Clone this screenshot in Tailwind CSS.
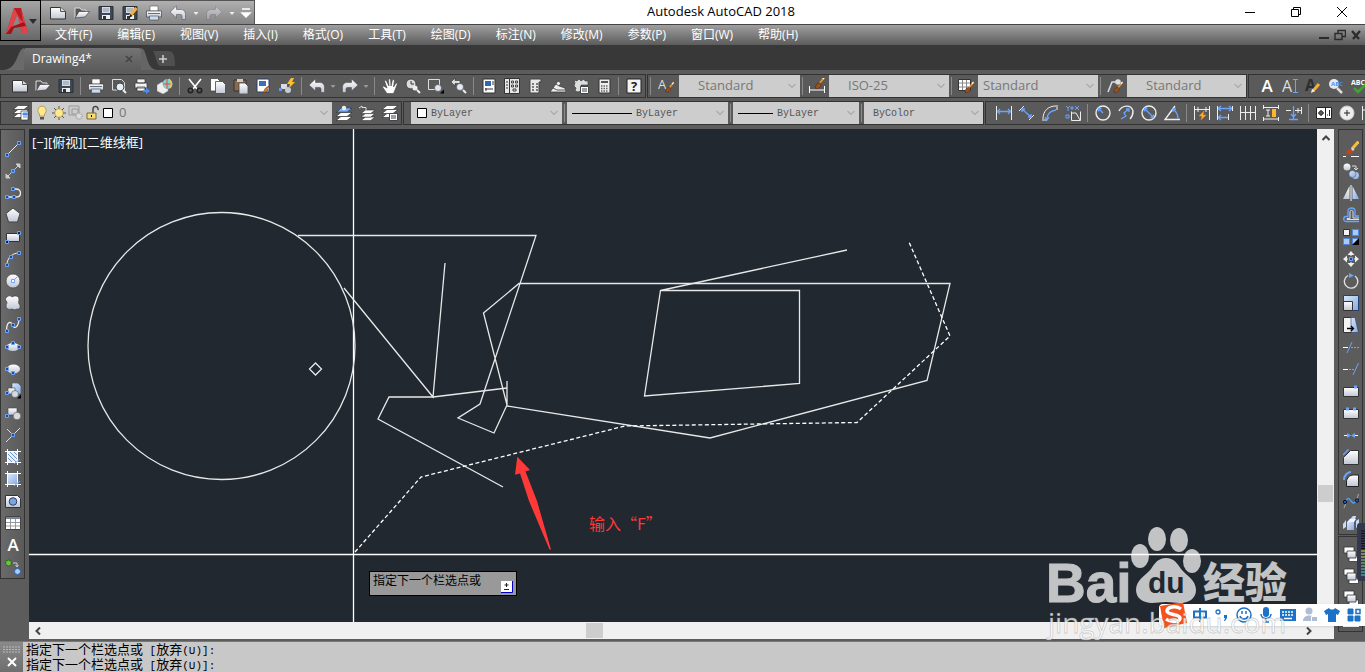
<!DOCTYPE html>
<html lang="zh-CN">
<head>
  <meta charset="UTF-8">
  <meta name="viewport" content="width=device-width, initial-scale=1">
  <title>Autodesk AutoCAD 2018</title>
  <script src="https://cdn.jsdelivr.net/npm/@tailwindcss/browser@4"></script>
</head>
<body class="relative flex h-screen flex-col overflow-hidden bg-[#5c5c5c] font-['Open_Sans','Noto_Sans_CJK_SC',sans-serif]">

  <!-- Shared icons -->
  <svg class="absolute size-0" aria-hidden="true">
    <defs>
      <linearGradient id="silver" x2="0" y2="1"><stop stop-color="#fff"/><stop offset="1" stop-color="#c0c6d4"/></linearGradient>
      <linearGradient id="sky" x2="1" y2="1"><stop stop-color="#d9e8ff"/><stop offset="1" stop-color="#86a9de"/></linearGradient>
    </defs>
    <symbol id="new" viewBox="0 0 16 16"><path d="M.5 2.500h10l5 4v7.500H.5z" fill="url(#silver)" stroke="#333"/><path d="M10.500 2.500v4h5" fill="#ddd" stroke="#555"/></symbol>
    <symbol id="open" viewBox="0 0 16 16"><path d="M1 13V3h5l1.500 2H12v2" fill="#555" stroke="#ddd"/><path d="M1 13l4-6.500h10.500L11 12z" fill="url(#silver)" stroke="#333" stroke-width=".6"/></symbol>
    <symbol id="save" viewBox="0 0 16 16"><path d="M1 1.500h14v13H1z" fill="#3d4756" stroke="#2b3038"/><path d="M4 2h8v6H4z" fill="#d5dbe3"/><path d="M5 4h6M5 6h6" stroke="#8b95a3"/><path d="M4 10h8v4H4z" fill="#eee"/><path d="M5 11h3v3H5z" fill="#333"/></symbol>
    <symbol id="print" viewBox="0 0 16 16"><path d="M4 1h8v5H4z" fill="#fff" stroke="#555" stroke-width=".6"/><path d="M.5 6h15v6H.5z" fill="url(#silver)" stroke="#333" stroke-width=".6"/><path d="M2 8.500h12" stroke="#69707a"/><path d="M3.500 11h9v4h-9z" fill="#c9dcf0" stroke="#444" stroke-width=".6"/></symbol>
    <symbol id="undo" viewBox="0 0 16 16"><path d="M0 7L6.500 1v3.500h4c3.500 0 5 2 5 5v5H12V11c0-1.500-1-1.500-2-1.500H6.500V13z" fill="url(#silver)" stroke="#444" stroke-width=".5"/></symbol>
    <symbol id="redo" viewBox="0 0 16 16"><path d="M16 7L9.500 1v3.500h-4C2 4.500.5 6.500.5 9.500v5H4V11c0-1.500 1-1.500 2-1.500h3.500V13z" fill="url(#silver)" stroke="#444" stroke-width=".5"/></symbol>
    <symbol id="drop" viewBox="0 0 8 8"><path d="M1.500 3h5L4 6z" fill="currentColor"/></symbol>
    <symbol id="chev" viewBox="0 0 8 8"><path d="M.5 2L4 5.500 7.500 2" fill="none" stroke="#aaa" stroke-width="1.200"/></symbol>
    <symbol id="brush" viewBox="0 0 16 16"><path d="M15 2l-5 6" stroke="#e9972c" stroke-width="2"/><path d="M15.500 1l-2 2.500" stroke="#fff" stroke-width="1.500"/><path d="M5 14c0-4 2-6 5-6l1.500 2c0 3-3 5-6.500 4z" fill="#9c5022" stroke="#4b2509" stroke-width=".6"/></symbol>
    <symbol id="sheets" viewBox="0 0 16 16"><g fill="#fff" stroke="#222" stroke-width=".6"><path d="M0 15.500l5-4h11l-5 4z"/><path d="M0 11.500l5-4h11l-5 4z"/><path d="M0 7.500l5-4h11l-5 4z"/></g></symbol>
    <symbol id="stack" viewBox="0 0 16 16"><g stroke="#333" stroke-width=".8"><path d="M1 1h10v6H1z" fill="#fff"/><path d="M6 10h9.500v5.500H6z" fill="#fff"/><path d="M4 5h9v7H4z" fill="url(#silver)"/></g></symbol>
  </svg>

  <!-- Title bar and menus -->
  <header class="flex h-[45px] shrink-0 bg-[#606060]">
    <button aria-label="AutoCAD" class="flex h-[41px] w-[41px] items-center border border-black bg-linear-to-b from-[#a5a5a5] to-[#686868] pl-1">
      <svg class="h-7 w-6" viewBox="0 0 24 28"><path d="M1 27L9 1h7l7 25h-6l-2-6-8 1-1 6z" fill="#c8262c"/><path d="M9 1L1 27l5-2L12 8l3 12 2 6 6 0L16 1z" fill="#e0444a"/><path d="M12 8L8 19l7-1z" fill="#8a8a8a"/><path d="M1 27l5-7 13-5 2 4-12 2-3 6z" fill="#a5141b"/><path d="M9 1l6 11 3 3-2-14z" fill="#b71d23"/></svg>
      <svg class="size-2 text-[#252d38]" viewBox="0 0 8 8"><path d="M0 2h8L4 7z" fill="currentColor"/></svg>
    </button>
    <div class="flex min-w-0 flex-1 flex-col">
      <div class="flex h-6 items-center bg-white">
        <div class="flex h-6 w-[214px] items-center border-t border-r border-[#555] bg-linear-to-b from-[#b0b0b0] to-[#858585] pl-[5px] text-[#eee] [&_svg]:size-4 [&>button]:grid [&>button]:h-6 [&>button]:w-6 [&>button]:shrink-0 [&>button]:place-items-center">
          <button aria-label="新建"><svg><use href="#new"/></svg></button>
          <button aria-label="打开"><svg><use href="#open"/></svg></button>
          <button aria-label="保存"><svg><use href="#save"/></svg></button>
          <button aria-label="另存为"><svg viewBox="0 0 16 16"><use href="#save"/><path d="M14.500 3L8 11" stroke="#f2b13a" stroke-width="3"/><path d="M8.500 9L7 13l3.500-2z" fill="#222"/></svg></button>
          <button aria-label="打印"><svg><use href="#print"/></svg></button>
          <button aria-label="放弃"><svg><use href="#undo"/></svg></button>
          <svg class="h-2! w-3!"><use href="#drop"/></svg>
          <button aria-label="重做" class="opacity-40"><svg><use href="#redo"/></svg></button>
          <svg class="h-2! w-3!"><use href="#drop"/></svg>
          <button aria-label="自定义" class="w-4!"><svg class="size-3!" viewBox="0 0 12 12"><path d="M2 2h8M2 6h8l-4 4z" stroke="#fff" stroke-width="1.500" fill="#fff"/></svg></button>
        </div>
        <h1 class="flex-1 pr-10 text-center text-[13px] text-black">Autodesk AutoCAD 2018</h1>
        <div class="flex text-black [&_svg]:size-3 [&>button]:grid [&>button]:h-6 [&>button]:w-[46px] [&>button]:place-items-center">
          <button aria-label="最小化"><svg viewBox="0 0 12 12"><path d="M1 6.500h10" stroke="currentColor"/></svg></button>
          <button aria-label="还原"><svg viewBox="0 0 12 12"><path d="M1.500 3.500h7v7h-7zM3.500 3V1.500h7v7H9" fill="none" stroke="currentColor"/></svg></button>
          <button aria-label="关闭"><svg viewBox="0 0 12 12"><path d="M1 1l10 10M11 1L1 11" stroke="currentColor"/></svg></button>
        </div>
      </div>
      <nav class="flex h-[21px] items-center gap-[25px] border-t border-[#444] bg-linear-to-b from-[#a0a0a0] to-[#5c5c5c] pl-3.5 text-xs whitespace-nowrap text-white">
        <a href="#">文件(F)</a>
        <a href="#">编辑(E)</a>
        <a href="#">视图(V)</a>
        <a href="#">插入(I)</a>
        <a href="#">格式(O)</a>
        <a href="#">工具(T)</a>
        <a href="#">绘图(D)</a>
        <a href="#">标注(N)</a>
        <a href="#">修改(M)</a>
        <a href="#">参数(P)</a>
        <a href="#">窗口(W)</a>
        <a href="#">帮助(H)</a>
        <div class="ml-auto flex gap-1 pr-[3px] text-[#2b2b2b] [&_svg]:size-3">
          <button aria-label="最小化图形"><svg viewBox="0 0 12 12"><path d="M1 9h10" stroke="currentColor" stroke-width="2"/></svg></button>
          <button aria-label="还原图形"><svg viewBox="0 0 12 12"><path d="M1 4.500h7v6H1zM4 4V1.500h7.500v6H8" fill="none" stroke="currentColor" stroke-width="1.400"/></svg></button>
          <button aria-label="关闭图形"><svg viewBox="0 0 12 12"><path d="M2 2l7 8M10 2L3 10" stroke="currentColor" stroke-width="2.400"/></svg></button>
        </div>
      </nav>
    </div>
  </header>

  <!-- Drawing tabs -->
  <div class="flex h-[25px] shrink-0 items-end bg-[#383838] pl-1 text-xs text-white">
    <svg class="h-[22px] w-5" viewBox="0 0 20 22"><path d="M0 22C14 21 13 1 20 0v22z" fill="#6a6a6a"/></svg>
    <div class="flex h-[22px] w-[117px] items-center justify-between rounded-t-xs bg-linear-to-b from-[#747474] to-[#5c5c5c] pl-2">
      <a href="#">Drawing4*</a>
      <button aria-label="关闭选项卡" class="pr-2"><svg class="size-2" viewBox="0 0 8 8"><path d="M1 1l6 6M7 1L1 7" stroke="#444" stroke-width="1.600"/></svg></button>
    </div>
    <svg class="h-[22px] w-4" viewBox="0 0 16 22"><path d="M0 0c7 1 4 21 16 22H0z" fill="#656565"/></svg>
    <button aria-label="新图形" class="-ml-1 mb-[3px]"><svg class="h-4 w-[22px]" viewBox="0 0 22 16"><path d="M0 0h15c5 0 7 3 7 15H7C3 13 3 4 0 0z" fill="#505050"/><path d="M6 8h8M10 4v8" stroke="#ccc" stroke-width="1.600"/></svg></button>
  </div>

  <!-- Toolbars -->
  <div class="flex shrink-0 flex-col gap-[3px] overflow-hidden py-1 [&_button]:grid [&_button]:h-[22px] [&_button]:w-[23px] [&_button]:shrink-0 [&_button]:place-items-center [&_hr]:mx-[3px] [&_hr]:h-[18px] [&_hr]:w-px [&_hr]:shrink-0 [&_hr]:border-0 [&_hr]:bg-[#8a8a8a] [&_svg]:size-4 [&_svg]:shrink-0">
    <div class="flex gap-px text-[13px] text-[#777]">
      <div class="flex h-6 w-[646px] shrink-0 items-center border border-[#333] bg-[#5a5a5a] pl-[7px]">
        <button aria-label="新建"><svg><use href="#new"/></svg></button>
        <button aria-label="打开"><svg><use href="#open"/></svg></button>
        <button aria-label="保存"><svg><use href="#save"/></svg></button>
        <hr>
        <button aria-label="打印"><svg><use href="#print"/></svg></button>
        <button aria-label="打印预览"><svg viewBox="0 0 16 16"><path d="M1.500 1.500h9l3 3V12h-12z" fill="#5a5a5a" stroke="#ddd"/><circle cx="9" cy="9" r="4" fill="#e8eef6" stroke="#444"/><path d="M12 12l3 3" stroke="#eee" stroke-width="2"/></svg></button>
        <button aria-label="发布"><svg viewBox="0 0 16 16"><path d="M3 1h8v4H3zM1 5h12v5H1zM3 9h8v4H3z" fill="#f2f3f5" stroke="#333" stroke-width=".7"/><path d="M9 12h3v-2.500l4 3.500-4 3V14H9z" fill="#4a8df0"/></svg></button>
        <button aria-label="三维打印"><svg viewBox="0 0 16 16"><path d="M0 7l5-3 6 3v6l-5 3-6-3z" fill="#eee" stroke="#999" stroke-width=".5"/><circle cx="10.500" cy="6" r="5" fill="#7fd0d8"/><path d="M10 1v10M6 6h9" stroke="#e54b2c"/><path d="M12 1c3 3 3 6 1 9" fill="none" stroke="#f6c742" stroke-width="1.500"/></svg></button>
        <hr>
        <button aria-label="剪切"><svg viewBox="0 0 16 16"><path d="M2 1l8 10M14 1L6 11" stroke="#fff" stroke-width="1.600"/><circle cx="3.500" cy="12.500" r="2.200" fill="none" stroke="#222" stroke-width="1.600"/><circle cx="12.500" cy="12.500" r="2.200" fill="none" stroke="#222" stroke-width="1.600"/></svg></button>
        <button aria-label="复制"><svg viewBox="0 0 16 16"><path d="M.5.5h7l3 3V13H.5z" fill="#fff" stroke="#444" stroke-width=".8"/><path d="M5.500 3.500h7l3 3v9h-10z" fill="url(#silver)" stroke="#444" stroke-width=".8"/></svg></button>
        <button aria-label="粘贴"><svg viewBox="0 0 16 16"><path d="M1 2h12v11H1z" fill="#8b6a4b" stroke="#333"/><path d="M4 1h6v3H4z" fill="#ccc"/><path d="M6 5h6l3 3v8H6z" fill="url(#silver)" stroke="#444" stroke-width=".8"/></svg></button>
        <button aria-label="特性匹配"><svg viewBox="0 0 16 16"><path d="M1 1h12v13H1z" fill="#fff" stroke="#27406b"/><path d="M3 3h7v5H3z" fill="#3e6fb5"/><path d="M14 8l-3 2 1 3-5 2c2-4 2-5 4-6z" fill="#d47a26" stroke="#7a3c0c" stroke-width=".6"/></svg></button>
        <button aria-label="块编辑器"><svg viewBox="0 0 16 16"><path d="M2 6h6v5H2z" fill="#ddd"/><circle cx="9" cy="12" r="3" fill="#c6cbd4"/><path d="M12 0L8 6h3l-1 4 6-6h-3l2-4z" fill="#ffc02e"/><path d="M0 10h3v3H0z" fill="#5b9bff"/></svg></button>
        <hr>
        <button aria-label="放弃"><svg><use href="#undo"/></svg></button>
        <svg class="h-2! w-2.5! text-[#999]"><use href="#drop"/></svg>
        <button aria-label="重做"><svg><use href="#redo"/></svg></button>
        <svg class="h-2! w-2.5! text-[#999]"><use href="#drop"/></svg>
        <hr>
        <button aria-label="实时平移"><svg viewBox="0 0 16 16"><path d="M5 15.500L.5 9l1-1L5 10 2.500 3 4 2l3 6-.5-7H8.500L9 8l1.500-6.500L12.500 2l-1 7L14 5l1.500.5L13 12l-1.500 3.500z" fill="#fff" stroke="#444" stroke-width=".6"/></svg></button>
        <button aria-label="实时缩放"><svg viewBox="0 0 16 16"><circle cx="6" cy="6" r="5" fill="#ddd" stroke="#444"/><path d="M6 3v3h3" fill="none" stroke="#333"/><circle cx="10" cy="10" r="2.500" fill="#eee"/><path d="M12 12l3 3" stroke="#eee" stroke-width="2"/></svg></button>
        <button aria-label="窗口缩放"><svg viewBox="0 0 16 16"><path d="M.5 1.500h11v10H.5z" fill="none" stroke="#ddd"/><circle cx="10" cy="10" r="3.500" fill="#dfe5ee" stroke="#444" stroke-width=".6"/><path d="M12 15.500h4v-4z" fill="#000"/></svg></button>
        <button aria-label="缩放上一个"><svg viewBox="0 0 16 16"><path d="M0 4l4-4v2.500h5v3H4V8z" fill="#ddd" stroke="#333" stroke-width=".6"/><circle cx="9" cy="9" r="3.500" fill="#e6ebf3" stroke="#444" stroke-width=".6"/><path d="M12 12l3 3" stroke="#eee" stroke-width="2"/></svg></button>
        <hr>
        <button aria-label="特性"><svg viewBox="0 0 16 16"><path d="M2 1h12v14H2z" fill="#fff" stroke="#333"/><path d="M4 3h6v5H4z" fill="#3565ad"/><path d="M4 11h8M12 3v4M5 13v-3" stroke="#333"/></svg></button>
        <button aria-label="设计中心"><svg viewBox="0 0 16 16"><path d="M.5.5h15v15H.5z" fill="#e8e8e8" stroke="#333"/><path d="M5.500 1v14" stroke="#333"/><path d="M2 4h2M2 7h2M2 10h2" stroke="#333"/><path d="M7.500 3h2v2h-2zM11.500 3h2v2h-2zM7.500 7h2v2h-2zM11.500 7h2v2h-2zM9 11h3v2H9z" fill="none" stroke="#444"/></svg></button>
        <button aria-label="工具选项板"><svg viewBox="0 0 16 16"><path d="M3 1h11v3h-2v11H3z" fill="#e8e8e8" stroke="#444"/><path d="M5 6h2M9 6h2M5 9h2M9 9h2M5 12h2M9 12h2" stroke="#555" stroke-width="1.500"/></svg></button>
        <button aria-label="图纸集"><svg viewBox="0 0 16 16"><path d="M0 14l3-4 5-7 3 2-2 3 6 2 1 4z" fill="#eee" stroke="#333" stroke-width=".7"/><path d="M3 10l4 2h8M6 6l3 2" stroke="#555" fill="none"/></svg></button>
        <button aria-label="标记集"><svg viewBox="0 0 16 16"><path d="M1 2l3 1 2-2 2 2 3-2 1 2 3 0v4H8v6l-3 1-3-1 1-3-2-2 1-3z" fill="#ddd" stroke="#333" stroke-width=".6"/><path d="M7.500 8.500h8v7h-8z" fill="#fff" stroke="#444"/><path d="M9 11h5M9 13h5" stroke="#345"/></svg></button>
        <button aria-label="计算器"><svg viewBox="0 0 16 16"><path d="M3 1h11v14H3z" fill="#eee" stroke="#333"/><path d="M5 3h7v2H5z" fill="#555"/><path d="M5 8h7M5 10.500h7M5 13h7" stroke="#666" stroke-width="1.500" stroke-dasharray="1.500 1"/></svg></button>
        <hr>
        <button aria-label="帮助"><svg viewBox="0 0 16 16"><path d="M1 1h14v14H1z" fill="#f4f4f4" stroke="#222"/><text x="8" y="13" text-anchor="middle" font-size="13" font-weight="700" fill="#222">?</text></svg></button>
      </div>
      <div class="flex h-6 w-[600px] shrink-0 items-center border border-[#333] bg-[#5a5a5a] [&>button]:w-6! [&>hr]:mx-0.5!">
        <hr>
        <button aria-label="文字样式" class="flex-1"><svg viewBox="0 0 16 16"><text x="0" y="11" font-size="13" fill="#ddd">A</text><use href="#brush" x="4" y="3" width="12" height="13"/></svg></button>
        <label class="flex h-[22px] w-[121px] items-center bg-[#cdcdcd] pr-1"><select aria-label="文字样式名" class="min-w-0 flex-1 appearance-none pl-[19px]"><option>Standard</option></select><svg class="size-2!"><use href="#chev"/></svg></label>
        <hr>
        <button aria-label="标注样式"><svg viewBox="0 0 16 16"><path d="M.5 8v7M15.500 8v7M1 12h14" stroke="#fff"/><use href="#brush" x="2" y="-2" width="14" height="14"/></svg></button>
        <label class="flex h-[22px] w-[120px] items-center bg-[#cdcdcd] pr-1"><select aria-label="标注样式名" class="min-w-0 flex-1 appearance-none pl-[19px]"><option>ISO-25</option></select><svg class="size-2!"><use href="#chev"/></svg></label>
        <hr>
        <button aria-label="表格样式"><svg viewBox="0 0 16 16"><path d="M.5 1.500h12v11H.5z" fill="#fff" stroke="#333"/><path d="M1 5h11M1 9h11M4.500 2v10M8.500 2v10" stroke="#888"/><use href="#brush" x="3" y="3" width="13" height="13"/></svg></button>
        <label class="flex h-[22px] w-[120px] items-center bg-[#cdcdcd] pr-1"><select aria-label="表格样式名" class="min-w-0 flex-1 appearance-none pl-[5px]"><option>Standard</option></select><svg class="size-2!"><use href="#chev"/></svg></label>
        <hr>
        <button aria-label="多重引线样式"><svg viewBox="0 0 16 16"><path d="M1 14L5 4h5" fill="none" stroke="#ddd" stroke-width="1.500"/><circle cx="11" cy="4" r="2.800" fill="#ddd"/><use href="#brush" x="3" y="3" width="13" height="13"/></svg></button>
        <label class="flex h-[22px] w-[119px] items-center bg-[#cdcdcd] pr-1"><select aria-label="引线样式名" class="min-w-0 flex-1 appearance-none pl-[19px]"><option>Standard</option></select><svg class="size-2!"><use href="#chev"/></svg></label>
      </div>
      <div class="flex h-6 min-w-0 flex-1 items-center border border-r-0 border-[#333] bg-[#5a5a5a] pl-1.5">
        <button aria-label="多行文字"><svg viewBox="0 0 16 16"><text x="8" y="14" text-anchor="middle" font-size="17" font-weight="600" fill="#fff">A</text></svg></button>
        <button aria-label="单行文字"><svg viewBox="0 0 16 16"><text x="0" y="14" font-size="16" fill="#ddd">A</text><path d="M11 1.500h5M11 14.500h5M13.500 2v12" stroke="#6aa4ff"/></svg></button>
        <button aria-label="编辑文字"><svg viewBox="0 0 16 16"><text x="0" y="13" font-size="16" font-weight="700" fill="#2d2d2d">A</text><path d="M14 6l-6 7" stroke="#f2b13a" stroke-width="3"/><path d="M7 11l-1 4 4-2z" fill="#eee"/></svg></button>
        <button aria-label="查找"><svg viewBox="0 0 16 16"><circle cx="6" cy="6" r="5" fill="#e4e9f2"/><text x="3" y="8" font-size="6" font-weight="700" fill="#4a8df0">ABC</text><path d="M9 10l5 5" stroke="#ddd" stroke-width="2.500"/></svg></button>
        <button aria-label="拼写检查"><svg viewBox="0 0 16 16"><text x="0" y="7" font-size="7" font-weight="700" fill="#fff">ABC</text><path d="M3 10l4 4 7-7" fill="none" stroke="#3fa52c" stroke-width="2.500"/></svg></button>
      </div>
    </div>

    <div class="flex gap-px text-[13px] text-[#777]">
      <div class="flex h-6 w-[402px] shrink-0 items-center border border-[#333] bg-[#5a5a5a] pl-2">
        <button aria-label="图层特性"><svg viewBox="0 0 16 16"><use href="#sheets" x="0" y="-3" width="16" height="16"/><path d="M8 6h7v9H8z" fill="#fff" stroke="#333" stroke-width=".7"/><path d="M10 8h4v2h-4zM10 12h4" fill="#4a8df0" stroke="#4a8df0"/></svg></button>
        <label class="flex h-[22px] w-[300px] items-center gap-px bg-[#cdcdcd] pr-1 pl-0.5">
          <svg viewBox="0 0 16 16"><path d="M8 1a4.500 4.500 0 0 0-2.500 8v2h5V9A4.500 4.500 0 0 0 8 1z" fill="#ffe98c" stroke="#a08a3a" stroke-width=".7"/><path d="M6 12h4v2.500H6z" fill="#555"/></svg>
          <svg viewBox="0 0 16 16"><path d="M8 1v14M1 8h14M3 3l10 10M13 3L3 13" stroke="#555"/><circle cx="8" cy="8" r="4.200" fill="#ffe98c" stroke="#a08a3a" stroke-width=".7"/></svg>
          <svg viewBox="0 0 16 16"><path d="M1 1h10v9H1zM4 4h6v5H4z" fill="none" stroke="#999"/><circle cx="11" cy="11" r="3" fill="#ddd" stroke="#aaa" stroke-dasharray="1 1" stroke-width="2"/></svg>
          <svg viewBox="0 0 16 16"><path d="M8 8V4c0-4 6-3 5 1" fill="none" stroke="#444" stroke-width="1.500"/><path d="M2 8h9v6H2z" fill="#f3dc7a" stroke="#7b6a28"/><path d="M6 10h1v2H6z" fill="#000"/></svg>
          <svg class="size-3!" viewBox="0 0 12 12"><path d="M1.500 1.500h9v9h-9z" fill="#fff" stroke="#000"/></svg>
          <select aria-label="图层" class="min-w-0 flex-1 appearance-none pl-1"><option>0</option></select>
          <svg class="size-2!"><use href="#chev"/></svg>
        </label>
        <button aria-label="置为当前"><svg viewBox="0 0 16 16"><use href="#sheets" width="16" height="16"/><path d="M1 7l4-4h10l-4 4z" fill="#7fb0f5" stroke="#1f3f75" stroke-width=".6"/><circle cx="8" cy="3" r="2.200" fill="#eee"/></svg></button>
        <button aria-label="上一个图层"><svg viewBox="0 0 16 16"><use href="#sheets" x="2" y="2" width="14" height="14"/><path d="M0 3l3-2v1.500h4V5" fill="none" stroke="#ddd"/></svg></button>
        <button aria-label="图层状态"><svg viewBox="0 0 16 16"><use href="#sheets" y="-3" width="16" height="16"/><path d="M7.500 8.500h8v7h-8z" fill="#fff" stroke="#444"/><path d="M9 11h5M9 13h5" stroke="#345"/></svg></button>
      </div>
      <div class="flex h-6 w-[581px] shrink-0 items-center border border-[#333] bg-[#5a5a5a] pl-[7px] font-['Liberation_Mono',monospace] text-[10px] text-[#555] [&>hr]:mx-0.5!">
        <label class="flex h-[22px] w-[151px] items-center bg-[#cdcdcd] pr-1 pl-[5px]"><svg class="size-3!" viewBox="0 0 12 12"><path d="M1.500 1.500h9v9h-9z" fill="#fff" stroke="#000"/></svg><select aria-label="颜色" class="min-w-0 flex-1 appearance-none pl-[3px]"><option>ByLayer</option></select><svg class="size-2!"><use href="#chev"/></svg></label>
        <hr>
        <label class="flex h-[22px] w-[161px] items-center bg-[#cdcdcd] pr-1 pl-[5px]"><span class="h-px w-[60px] bg-black"></span><select aria-label="线型" class="min-w-0 flex-1 appearance-none pl-1"><option>ByLayer</option></select><svg class="size-2!"><use href="#chev"/></svg></label>
        <hr>
        <label class="flex h-[22px] w-[126px] items-center bg-[#cdcdcd] pr-1 pl-[5px]"><span class="h-px w-[35px] bg-black"></span><select aria-label="线宽" class="min-w-0 flex-1 appearance-none pl-1"><option>ByLayer</option></select><svg class="size-2!"><use href="#chev"/></svg></label>
        <hr>
        <label class="flex h-[22px] w-[119px] items-center bg-[#cdcdcd] pr-1"><select aria-label="打印样式" class="min-w-0 flex-1 appearance-none pl-[9px]"><option>ByColor</option></select><svg class="size-2!"><use href="#chev"/></svg></label>
      </div>
      <div class="flex h-6 min-w-0 flex-1 items-center border border-r-0 border-[#333] bg-[#5a5a5a] pl-1.5 [&_svg]:fill-none [&_svg]:stroke-[#eee]">
        <button aria-label="线性"><svg viewBox="0 0 16 16"><path d="M.5 1v14M15.500 1v14"/><path d="M1 6.500h14M4 4L1.500 6.500 4 9M12 4l2.500 2.500L12 9" stroke="#6aa4ff" stroke-width="1.300"/></svg></button>
        <button aria-label="对齐"><svg viewBox="0 0 16 16"><path d="M0 6l5-5M10 15l5-5"/><path d="M3 4l9 8M3 7V4h3M12 9v3H9" stroke="#6aa4ff" stroke-width="1.300"/></svg></button>
        <button aria-label="弧长"><svg viewBox="0 0 16 16"><path d="M1 14C1 6 6 1 14 1M0 15h5M15 0v5"/><path d="M5 14c0-5 3-8 9-9M3 12l2 3 2-3" stroke="#6aa4ff" stroke-width="1.300"/></svg></button>
        <button aria-label="坐标"><svg viewBox="0 0 16 16"><path d="M6.500 15.500h9v-9M6.500 15.500v-9M7 8h4l4 7"/><path d="M1 1l2 2 2-2M3 3v3M10 1l4 4M14 1l-4 4M1 10h3v3H1zM6 2h2v2H6z" stroke="#6aa4ff"/></svg></button>
        <hr>
        <button aria-label="半径"><svg viewBox="0 0 16 16"><circle cx="8" cy="8" r="7" stroke-width="1.400"/><path d="M8 8L3.500 3.500M3.500 6.500v-3h3" stroke="#6aa4ff" stroke-width="1.300"/></svg></button>
        <button aria-label="折弯"><svg viewBox="0 0 16 16"><path d="M1 6c3-6 12-7 14 0 0 3-1 6-3 8" stroke-width="1.400"/><path d="M3 14l5-3-2-3 5-4M8 4h3v3" stroke="#6aa4ff" stroke-width="1.300"/></svg></button>
        <button aria-label="直径"><svg viewBox="0 0 16 16"><circle cx="8" cy="8" r="7" stroke-width="1.400"/><path d="M3.500 3.500l9 9M3.500 6.500v-3h3M12.500 9.500v3h-3" stroke="#6aa4ff" stroke-width="1.300"/></svg></button>
        <button aria-label="角度"><svg viewBox="0 0 16 16"><path d="M11 1L1 14.500h15" stroke-width="1.400"/><path d="M9 4c4 3 5 6 5 10M9 7V4h3" stroke="#6aa4ff" stroke-width="1.300"/></svg></button>
        <hr>
        <button aria-label="快速标注"><svg viewBox="0 0 16 16"><path d="M.5 1v14M15.500 1v14M1 4.500h14M4 2v5M12 2v5"/><path d="M10 6l-5 5h3l-1 4 5-5H9z" fill="#ffb52e" stroke="#e8801a" stroke-width=".6"/></svg></button>
        <button aria-label="基线"><svg viewBox="0 0 16 16"><path d="M1 3.500h14M1 12.500h10M4 1L1 3.500 4 6M12 1l3 2.500L12 6M4 10l-3 2.500L4 15" stroke="#6aa4ff" stroke-width="1.300"/><path d="M.5 1v14M15.500 1v5M11.500 9v6"/></svg></button>
        <button aria-label="连续"><svg viewBox="0 0 16 16"><path d="M.5 1v14M5.500 1v14M10.500 1v14M15.500 1v14M1 7.500h14"/></svg></button>
        <button aria-label="等距标注"><svg viewBox="0 0 16 16"><path d="M.5 0v4M15.500 0v4M1 2.500h14M.5 12v4M15.500 12v4M1 14h14M3 5h4M5 5v6M3 11h4"/><path d="M9 4h4v8H9z" fill="#ffb52e" stroke="none"/></svg></button>
        <button aria-label="折断标注"><svg viewBox="0 0 16 16"><path d="M0 5.500h5M9 5.500h7M15.500 2v7M12 3v5"/><path d="M7.500 1v14M3 14.500h9M5 9l2.500 3L10 9" stroke="#6aa4ff" stroke-width="1.300"/></svg></button>
        <hr>
        <button aria-label="公差"><svg viewBox="0 0 16 16"><path d="M.5 2.500h15v11H.5z" fill="#fff" stroke="#222"/><path d="M9.500 3v10M2 8h6M5 5v6M13.500 5v6M11 10h1" stroke="#222"/><circle cx="5" cy="8" r="2" stroke="#222"/></svg></button>
        <button aria-label="圆心标记"><svg viewBox="0 0 16 16"><circle cx="8" cy="8" r="7" fill="#eee" stroke="#ccc"/><path d="M8 5v6M5 8h6" stroke="#222"/></svg></button>
        <button aria-label="检验"><svg viewBox="0 0 16 16"><path d="M.5 1v14M1 5h15"/><path d="M3 11l3 3 6-6" stroke="#3fa52c" stroke-width="2"/></svg></button>
      </div>
    </div>
  </div>

  <!-- Work area -->
  <main class="flex min-h-0 flex-1 gap-1 pr-0.5 pb-0.5 [&_aside_button]:grid [&_aside_button]:h-[22px] [&_aside_button]:w-[23px] [&_aside_button]:shrink-0 [&_aside_button]:place-items-center [&_aside_svg]:size-4">
    <aside class="flex w-[25px] shrink-0 flex-col self-start border border-[#333] bg-linear-to-r from-[#6a6a6a] to-[#5a5a5a] pt-2">
      <button aria-label="直线"><svg viewBox="0 0 16 16"><path d="M2 14L14 2" stroke="#eee"/><path d="M.5 12.500h3v3h-3zM12.500.5h3v3h-3z" fill="#2b4a80" stroke="#6aa4ff"/></svg></button>
      <button aria-label="构造线"><svg viewBox="0 0 16 16"><path d="M3 13L13 3" stroke="#ccc"/><path d="M1 15v-4l4 4zM15 1v4l-4-4z" fill="#ccc" stroke="#ccc"/><path d="M6.500 6.500h3v3h-3z" fill="#2b6adf" stroke="#6aa4ff"/></svg></button>
      <button aria-label="多段线"><svg viewBox="0 0 16 16"><path d="M2 12h9c6 0 6-8 0-8H8" fill="none" stroke="#eee" stroke-width="1.300"/><path d="M.5 10.500h3v3h-3zM7.500 10.500h3v3h-3zM6.500 2.500h3v3h-3z" fill="#2b4a80" stroke="#6aa4ff"/></svg></button>
      <button aria-label="多边形"><svg viewBox="0 0 16 16"><path d="M8 1l7 5.500L12.500 15h-9L1 6.500z" fill="url(#silver)" stroke="#444"/></svg></button>
      <button aria-label="矩形"><svg viewBox="0 0 16 16"><path d="M1.500 4.500h13v8h-13z" fill="url(#silver)" stroke="#333"/><path d="M.5 11.500h3v3h-3zM12.500 2.500h3v3h-3z" fill="#222" stroke="#6aa4ff"/></svg></button>
      <button aria-label="圆弧"><svg viewBox="0 0 16 16"><path d="M2 14C2 7 7 2 14 2" fill="none" stroke="#eee"/><path d="M.5 12.500h3v3h-3zM4.500 4.500h3v3h-3zM12.500.5h3v3h-3z" fill="#2b4a80" stroke="#6aa4ff"/></svg></button>
      <button aria-label="圆"><svg viewBox="0 0 16 16"><circle cx="8" cy="8" r="7" fill="url(#silver)" stroke="#444" stroke-width=".7"/><path d="M8 8l4-4" stroke="#6aa4ff"/><path d="M6.500 6.500h3v3h-3z" fill="#fff" stroke="#6aa4ff"/></svg></button>
      <button aria-label="修订云线"><svg viewBox="0 0 16 16"><path d="M2 2c2-2 4-1 5 0 3-2 7-1 7 2 0 2-1 3 0 5 2 2 1 6-2 5-2 1-3 1-5 0-3 1-6 0-6-3 0-2 1-2 1-4C0 5 0 3 2 2z" fill="url(#silver)" stroke="#444" stroke-width=".7"/></svg></button>
      <button aria-label="样条曲线"><svg viewBox="0 0 16 16"><path d="M1.500 14c0-9 4-11 6-6s6 2 6.500-6" fill="none" stroke="#eee" stroke-width="1.300"/><path d="M.5 12.500h3v3h-3zM6.500 6.500h3v3h-3zM12.500.5h3v3h-3z" fill="#2b4a80" stroke="#6aa4ff"/></svg></button>
      <button aria-label="椭圆"><svg viewBox="0 0 16 16"><ellipse cx="8" cy="8" rx="6.500" ry="4" fill="url(#silver)"/><path d="M.5 6.500h3v3h-3zM12.500 6.500h3v3h-3zM6.500 2.500h3v3h-3z" fill="#2b4a80" stroke="#6aa4ff"/></svg></button>
      <button aria-label="椭圆弧"><svg viewBox="0 0 16 16"><ellipse cx="8.500" cy="8" rx="6.500" ry="4.500" fill="url(#silver)"/><path d="M.5 6.500h3v3h-3zM6.500 10.500h3v3h-3z" fill="#2b4a80" stroke="#6aa4ff"/></svg></button>
      <button aria-label="插入块"><svg viewBox="0 0 16 16"><path d="M7 0h6l3 3v8H7z" fill="url(#sky)" stroke="#444" stroke-width=".6"/><path d="M3 5h7v6H3z" fill="url(#silver)" stroke="#444" stroke-width=".6"/><circle cx="10" cy="11" r="3.500" fill="#d5d9e0" stroke="#555" stroke-width=".6"/><path d="M12 15.500h4v-4z"/><path d="M.5 8.500h3v3h-3z" fill="#2b4a80" stroke="#6aa4ff"/></svg></button>
      <button aria-label="创建块"><svg viewBox="0 0 16 16"><path d="M3 3h9v7H3z" fill="url(#silver)" stroke="#444" stroke-width=".6"/><circle cx="12" cy="11" r="3.800" fill="#d5d9e0" stroke="#555" stroke-width=".6"/><path d="M.5 9.500h3v3h-3z" fill="#2b4a80" stroke="#6aa4ff"/></svg></button>
      <button aria-label="点"><svg viewBox="0 0 16 16"><path d="M2 2l7 7M15 1L1 15" stroke="#ddd"/><path d="M6.500 6.500h3v3h-3z" fill="#2b4a80" stroke="#6aa4ff"/></svg></button>
      <button aria-label="图案填充"><svg viewBox="0 0 16 16"><path d="M3 3h10v10H3z" fill="#e9f1ff"/><path d="M3 9l4 4M3 5l8 8M5 3l8 8M9 3l4 4" stroke="#6d94d0"/><path d="M2.500 0v16M12.500 0v16M0 2.500h16M0 13.500h16" stroke="#fff"/><path d="M9 15l6-5" stroke="#6aa4ff"/></svg></button>
      <button aria-label="渐变色"><svg viewBox="0 0 16 16"><path d="M3 3h10v10H3z" fill="url(#sky)"/><path d="M2.500 0v16M12.500 0v16M0 2.500h16M0 13.500h16" stroke="#fff"/><path d="M9 15l6-5" stroke="#6aa4ff"/></svg></button>
      <button aria-label="面域"><svg viewBox="0 0 16 16"><path d="M.5 2.500h12l3 3v9H.5z" fill="url(#silver)" stroke="#333"/><circle cx="8" cy="8.500" r="3.800" fill="#7fa4db" stroke="#27406b"/></svg></button>
      <button aria-label="表格"><svg viewBox="0 0 16 16"><path d="M.5 1.500h15v13H.5z" fill="#fff" stroke="#444"/><path d="M1 2h14v2H1z" fill="#76869c"/><path d="M1 7.500h14M1 11h14M5.500 4v10M10.500 4v10" stroke="#999"/></svg></button>
      <button aria-label="多行文字"><svg viewBox="0 0 16 16"><text x="8" y="14" text-anchor="middle" font-size="17" font-weight="600" fill="#fff">A</text></svg></button>
      <button aria-label="添加选定对象"><svg viewBox="0 0 16 16"><circle cx="3.500" cy="4" r="3" fill="#6cbf3f" stroke="#2d6a16"/><circle cx="12.500" cy="12.500" r="3" fill="#a9cdfb" stroke="#2d62b5"/><path d="M8 4h4v3M10.500 6l1.500 2 1.500-2" fill="none" stroke="#ccc"/></svg></button>
    </aside>

    <section class="flex min-w-0 flex-1 flex-col">
      <div class="flex min-h-0 flex-1">
        <div class="relative min-w-0 flex-1 overflow-hidden bg-[#212830]">
          <svg class="size-full" fill="none" stroke="#e8e8e8" stroke-width="1.300">
            <!-- crosshair -->
            <path d="M324.500 0V493M0 425.500H2000" stroke="#fff"/>
            <g transform="translate(-29 -129)">
              <circle cx="221.500" cy="346" r="133.500"/>
              <path d="M298 235.500h238L480 404l-22 14 36 15 13-28-23.500-92 35.500-29.500h431L927 380.500 710 438 507 406v-25"/>
              <path d="M344 288l89 109 12-134"/>
              <path d="M503 487l-125-68 11-22h44l74-9"/>
              <path d="M660.500 290.500h139v93L644.500 396zL847 250"/>
              <path d="M315.500 363l6 6-6 6-6-6z"/>
              <path d="M355 552l66-75 204-51 232-3.500L950 336l-41-94" stroke="#fff" stroke-dasharray="4 2.500"/>
              <path d="M517.300 456.700L530 470l-4.500 1.500L537 501l14 48.500h-1.500L529 501l-9-27.500-5 1.200z" fill="#ff3838" stroke="none"/>
            </g>
          </svg>
          <p class="absolute top-[5px] left-[3px] text-[13px] leading-4 text-white">[−][俯视][二维线框]</p>
          <p class="absolute top-[384px] left-[560px] font-['Noto_Sans_CJK_SC',sans-serif] text-base leading-5 text-[#ff3838]">输入“F”</p>
          <div class="absolute top-[442px] left-[340px] flex h-[25px] w-[148px] justify-between border border-black bg-[#999] px-[3px] pt-px text-xs text-black">
            <span>指定下一个栏选点或</span>
            <button aria-label="选项" class="self-end pb-0.5"><svg class="size-3" viewBox="0 0 12 12"><path d="M0 0h11v11H0z" fill="#fff"/><path d="M0 11.500h11.500V0" fill="none" stroke="#00c"/><path d="M3 8.500h5M5.500 2v4M3.500 4h4" stroke="#222"/></svg></button>
          </div>
        </div>
        <div class="flex w-[17px] shrink-0 flex-col items-center bg-[#f0f0f0]">
          <button aria-label="向上滚动" class="grid size-[17px] place-items-center"><svg class="size-2" viewBox="0 0 8 8"><path d="M.5 6L4 2.500 7.500 6" fill="none" stroke="#444" stroke-width="2"/></svg></button>
          <div class="flex-[339]"></div>
          <div class="h-[17px] w-[15px] bg-[#cdcdcd]"></div>
          <div class="flex-[120]"></div>
        </div>
      </div>
      <div class="flex h-[17px] shrink-0 items-center bg-[#f0f0f0] pr-[17px]">
        <button aria-label="向左滚动" class="grid size-[17px] place-items-center"><svg class="size-2" viewBox="0 0 8 8"><path d="M6 .5L2.500 4 6 7.500" fill="none" stroke="#444" stroke-width="2"/></svg></button>
        <div class="flex-[540]"></div>
        <div class="h-[15px] w-[17px] bg-[#cdcdcd]"></div>
        <div class="flex-[697]"></div>
        <button aria-label="向右滚动" class="grid size-[17px] place-items-center"><svg class="size-2" viewBox="0 0 8 8"><path d="M2 .5L5.500 4 2 7.500" fill="none" stroke="#444" stroke-width="2"/></svg></button>
      </div>
    </section>

    <div class="flex w-[25px] shrink-0 flex-col overflow-hidden">
      <aside class="flex shrink-0 flex-col border border-[#333] bg-[#5c5c5c] pt-2">
        <button aria-label="删除"><svg viewBox="0 0 16 16"><path d="M15.500.5L9 8" stroke="#f5bd3c" stroke-width="3"/><path d="M9.500 6.500l2 2-2 2-2-2z" fill="#cfd8e6"/><path d="M8 8l2 2c-1 4-4 4-7 3 1-4 3-5 5-5z" fill="#c3441a"/><path d="M0 15.500h3M8 15.500h8" stroke="#fff"/></svg></button>
        <button aria-label="复制"><svg viewBox="0 0 16 16"><circle cx="4" cy="4" r="3.500" fill="url(#silver)"/><circle cx="12.500" cy="12.500" r="3.500" fill="url(#sky)"/><circle cx="9.500" cy="11" r="3.500" fill="url(#sky)" stroke="#456" stroke-width=".5"/><path d="M9 3h4v4M11 5l2 2 2-2" fill="none" stroke="#ddd"/></svg></button>
        <button aria-label="镜像"><svg viewBox="0 0 16 16"><path d="M6.500 1v13H0z" fill="url(#silver)"/><path d="M9.500 1v13H16z" fill="url(#sky)"/><path d="M8 0v16" stroke="#fff"/></svg></button>
        <button aria-label="偏移"><svg viewBox="0 0 16 16"><path d="M16 14.500H3c-3 0-3-5 0-5h2V4c0-4 7-4 7 0v5h4" fill="none" stroke="#6aa4ff" stroke-width="1.300"/><path d="M16 12.500H4v-1h3V4.500c0-1.500 3-1.500 3 0V11h6" fill="none" stroke="#ddd"/></svg></button>
        <button aria-label="阵列"><svg viewBox="0 0 16 16"><path d="M.5.5h6v6h-6z" fill="#f4f4f4" stroke="#333"/><path d="M9.500.5h6v6h-6zM.5 9.500h6v6h-6zM9.500 9.500h6v6h-6z" fill="#a9c9fa" stroke="#4d86dd"/><path d="M9 16h7V9z"/></svg></button>
        <button aria-label="移动"><svg viewBox="0 0 16 16"><path d="M8 0l3.500 4h-7zM8 16l3.500-4h-7zM0 8l4-3.500v7zM16 8l-4-3.500v7z" fill="#eee"/><path d="M8 3v10M3 8h10" stroke="#eee" stroke-dasharray="2 6"/><path d="M6.500 6.500h3v3h-3z" fill="#2b4a80" stroke="#6aa4ff"/></svg></button>
        <button aria-label="旋转"><svg viewBox="0 0 16 16"><path d="M5 2.500a6.700 6.700 0 1 0 7 .5" fill="none" stroke="#ddd" stroke-width="1.400"/><path d="M6 0l5 2.500L6 5z" fill="#6aa4ff"/></svg></button>
        <button aria-label="缩放"><svg viewBox="0 0 16 16"><path d="M.5.500h15v15H.5z" fill="url(#sky)" stroke="#27406b"/><path d="M.5 6.500h9v9h-9z" fill="url(#silver)" stroke="#333"/></svg></button>
        <button aria-label="拉伸"><svg viewBox="0 0 16 16"><path d="M.5.500h8v15h-8z" fill="#f4f4f4" stroke="#333"/><path d="M8 .5h4l3.500 15H8z" fill="url(#sky)" stroke="#27406b" stroke-width=".6"/><path d="M4 11.500h6M8 9l2.500 2.500L8 14" fill="none" stroke="#000" stroke-width="1.300"/></svg></button>
        <button aria-label="修剪"><svg viewBox="0 0 16 16"><path d="M0 8.500h5" stroke="#fff"/><path d="M8 8.500h8" stroke="#6aa4ff" stroke-dasharray="2 1"/><path d="M9 3L4 14" stroke="#6aa4ff"/></svg></button>
        <button aria-label="延伸"><svg viewBox="0 0 16 16"><path d="M0 8.500h5" stroke="#fff"/><path d="M6 8.500h6" stroke="#6aa4ff" stroke-dasharray="2 1"/><path d="M15.500 2L10 14" stroke="#6aa4ff"/></svg></button>
        <button aria-label="打断于点"><svg viewBox="0 0 16 16"><path d="M.5 4.500h15v9H.5z" fill="url(#silver)" stroke="#333"/><path d="M11 2.500h3v3h-3z" fill="#6aa4ff"/></svg></button>
        <button aria-label="打断"><svg viewBox="0 0 16 16"><path d="M.5 4.500h15v9H.5z" fill="url(#silver)" stroke="#333"/><path d="M3 2.500h3v3H3zM10 2.500h3v3h-3z" fill="#6aa4ff"/></svg></button>
        <button aria-label="合并"><svg viewBox="0 0 16 16"><path d="M1 8.500h5M10 8.500h5" stroke="#fff"/><path d="M4 6l4 2.500L4 11zM12 6L8 8.500l4 2.500z" fill="#6aa4ff"/></svg></button>
        <button aria-label="倒角"><svg viewBox="0 0 16 16"><path d="M.5 15.500v-7l7-7h8v14z" fill="url(#silver)" stroke="#333"/><path d="M0 6l5.500-5.500" stroke="#6aa4ff" stroke-width="1.500"/></svg></button>
        <button aria-label="圆角"><svg viewBox="0 0 16 16"><path d="M3.500 15.500V11c0-4 3-7 7-7h5v11.500z" fill="url(#silver)" stroke="#222"/><path d="M1 9c0-4 3-8 7-8" fill="none" stroke="#6aa4ff" stroke-width="2"/></svg></button>
        <button aria-label="光顺曲线"><svg viewBox="0 0 16 16"><path d="M2 9c3-5 4-4 6-1s4 3 6-2" fill="none" stroke="#4fa0e8" stroke-width="1.400"/><path d="M1 15l2-5M14 6l1.500-5" stroke="#aaa"/><circle cx="2" cy="9" r="1.700" fill="#1f57b8" stroke="#112"/><circle cx="14" cy="7.500" r="1.700" fill="#1f57b8" stroke="#112"/></svg></button>
        <button aria-label="分解"><svg viewBox="0 0 16 16"><path d="M0 9l3-4v7l-3 2zM7 4l3-3h3l-1 4H6zM13 6l3-2v6l-3 3z" fill="#c6dcf8"/><path d="M4 7h7v8H4z" fill="url(#sky)"/><path d="M4 7l3-3h6l-2 3z" fill="#eef5ff"/></svg></button>
      </aside>
      <aside class="mt-px flex shrink-0 flex-col border border-[#333] bg-[#5c5c5c] pt-1.5">
        <button aria-label="前置"><svg><use href="#stack"/></svg></button>
        <button aria-label="后置"><svg><use href="#stack"/></svg></button>
        <button aria-label="置于对象之上"><svg><use href="#stack"/></svg></button>
        <button aria-label="置于对象之下"><svg viewBox="0 0 16 16"><path d="M0 14.500h16" stroke="#fff"/></svg></button>
      </aside>
    </div>
  </main>

  <!-- Command line -->
  <footer class="flex h-[31px] shrink-0 overflow-hidden border-t border-[#777] bg-[#c8c8c8] text-[13px] leading-[15px] text-black">
    <div class="flex w-[23px] shrink-0 flex-col items-center justify-between bg-linear-to-b from-[#8a8a8a] to-[#6e6e6e] pt-1 pb-1">
      <svg class="h-[7px] w-[18px]" viewBox="0 0 18 7"><path d="M0 1h18M0 3.500h18M0 6h18" stroke="#bbb" stroke-dasharray="2 1"/></svg>
      <button aria-label="关闭命令行"><svg class="size-3" viewBox="0 0 12 12"><path d="M2 2l8 8M10 2l-8 8" stroke="#fff" stroke-width="2"/></svg></button>
    </div>
    <div class="pl-[3px] whitespace-nowrap">
      <p class="h-[15px]">指定下一个栏选点或<span class="font-['Liberation_Mono',monospace] text-[11px]"> [</span>放弃<span class="font-['Liberation_Mono',monospace] text-[11px]">(U)]:</span></p>
      <p class="h-[15px]">指定下一个栏选点或<span class="font-['Liberation_Mono',monospace] text-[11px]"> [</span>放弃<span class="font-['Liberation_Mono',monospace] text-[11px]">(U)]:</span></p>
    </div>
  </footer>

  <!-- Input method bar -->
  <div class="absolute right-0 bottom-[46px] flex h-[22px] items-center rounded-l bg-white text-[#1b72c6] shadow-sm [&_svg]:size-4 [&>button]:grid [&>button]:w-[22px] [&>button]:place-items-center">
    <svg class="h-7! w-[30px]!" viewBox="0 0 30 28"><path d="M1 5l23-4 4 21-23 5z" fill="#f4511e"/><path d="M22 8C17 4 8 6 8 10s13 3 13 7-9 5-14 1" fill="none" stroke="#fff" stroke-width="3.500"/></svg>
    <button aria-label="中文"><svg viewBox="0 0 16 16"><path d="M2 4.500h12v6H2zM8 1v14" fill="none" stroke="currentColor" stroke-width="2"/></svg></button>
    <button aria-label="标点"><svg viewBox="0 0 16 16"><circle cx="4" cy="5" r="2" fill="none" stroke="currentColor" stroke-width="1.300"/><path d="M10 8h3v3l-2 3h-1l1-3h-1z" fill="currentColor"/></svg></button>
    <button aria-label="表情"><svg viewBox="0 0 16 16" fill="none" stroke="currentColor" stroke-width="1.500"><circle cx="8" cy="8" r="7"/><path d="M4 9c1 4 7 4 8 0M6 4v3M10 4v3"/></svg></button>
    <button aria-label="语音"><svg viewBox="0 0 16 16"><rect x="5" y="0" width="6" height="10" rx="3" fill="currentColor"/><path d="M3 7c0 6 10 6 10 0M8 11v4M5 15h6" fill="none" stroke="currentColor" stroke-width="1.500"/></svg></button>
    <button aria-label="键盘"><svg viewBox="0 0 16 16"><path d="M0 2h16v12H0z" fill="currentColor"/><path d="M2 5h12M2 8h12" stroke="#fff" stroke-width="1.500" stroke-dasharray="2 1"/><path d="M4 11.500h8" stroke="#fff" stroke-width="1.500"/></svg></button>
    <button aria-label="账号"><svg viewBox="0 0 16 16" fill="#aebcd6"><circle cx="7" cy="4" r="3.500"/><path d="M1 14c0-7 12-7 12-1v1z"/><path d="M9.500 9.500h6v5h-6z" stroke="#fff"/></svg></button>
    <button aria-label="皮肤"><svg viewBox="0 0 16 16"><path d="M5 1c1 2 5 2 6 0l5 3-2 4-2-1v8H4V7L2 8 0 4z" fill="currentColor"/></svg></button>
    <button aria-label="工具箱"><svg viewBox="0 0 16 16"><path d="M2 2h5v5H2zM2 9h5v5H2zM9 9h5v5H9z" fill="currentColor" stroke="currentColor"/><path d="M10 2.500h4v4h-4z" fill="none" stroke="currentColor" stroke-width="1.500"/></svg></button>
  </div>

  <!-- Level meter -->
  <svg class="absolute right-0 bottom-[91px] h-[58px] w-2" viewBox="0 0 8 58"><path d="M8 0H3Q0 0 0 3v52q0 3 3 3h5z" fill="#33384e"/><path d="M4 8h4M4 10.500h4M4 13h4M4 15.500h4M4 18h4M4 20.500h4M4 23h4M4 25.500h4" stroke="#111"/><path d="M4 28h4M4 31h4M4 34h4" stroke="#d8d84a"/><path d="M4 37h4M4 40h4M4 43h4" stroke="#8fd06a"/><path d="M4 46h4M4 49h4M4 52h4" stroke="#4fd0b0"/></svg>

  <!-- Watermark -->
  <svg class="pointer-events-none absolute right-[70px] bottom-7 h-[119px] w-[250px]" viewBox="0 0 250 119">
    <g fill="#fff" opacity=".72" font-family="Liberation Sans, Noto Sans CJK SC, sans-serif" font-weight="700">
      <text x="1" y="77" font-size="55" stroke="#fff">Bai</text>
      <ellipse cx="95" cy="31" rx="9" ry="12"/>
      <ellipse cx="112" cy="14" rx="9" ry="12"/>
      <ellipse cx="134" cy="15" rx="9" ry="12"/>
      <ellipse cx="147" cy="36" rx="9" ry="12"/>
      <path d="M121 33c8 0 11 5 15 11 5 6 15 11 15 21 0 9-8 13-16 13-5 0-9-1-14-1s-9 1-14 1c-9 0-16-5-16-13 0-10 10-15 15-21 4-6 7-11 15-11z"/>
      <text x="158" y="73" font-size="42" font-weight="900">经验</text>
    </g>
    <text x="103" y="68" font-family="Liberation Sans, sans-serif" font-size="30" font-weight="700" fill="#212830">du</text>
    <text x="3" y="108" font-family="Open Sans, sans-serif" font-size="28" fill="#fff" fill-opacity=".8" stroke="#888" stroke-opacity=".4" stroke-width=".8">jingyan.baidu.com</text>
  </svg>
</body>
</html>
